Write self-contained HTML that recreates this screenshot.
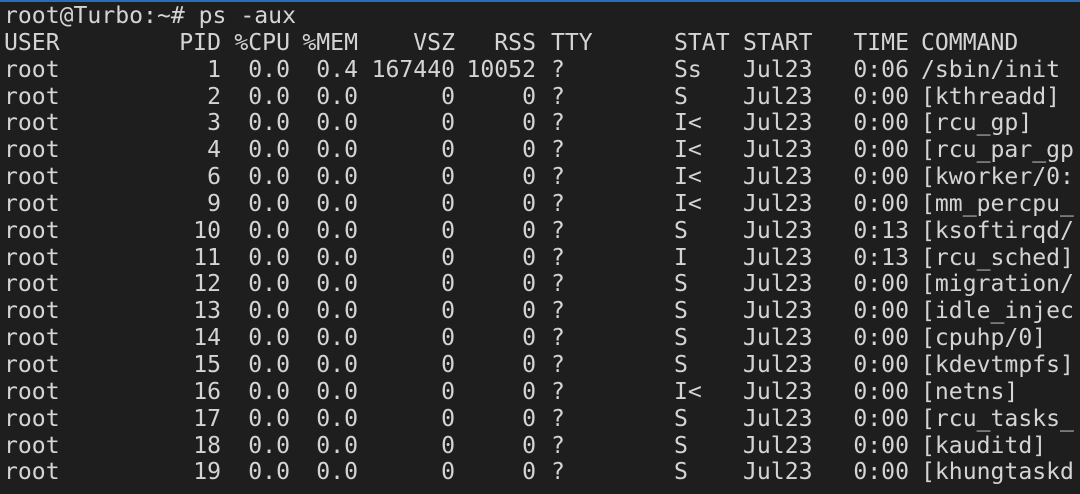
<!DOCTYPE html>
<html><head><style>
html,body{margin:0;padding:0;background:#1e1e1e;width:1080px;height:494px;overflow:hidden}
body{border-top:2px solid #2a6fb5;box-sizing:border-box;position:relative}
pre{margin:0;position:absolute;top:1px;font-family:"DejaVu Sans Mono","Liberation Mono",monospace;font-size:23.1px;line-height:26.85px;color:#d4d4d4;white-space:pre}
.l{text-align:left}.r{text-align:right}
</style></head><body>
<pre style="left:4px">root@Turbo:~# ps -aux</pre>
<pre style="left:4px;top:27.85px">USER
root
root
root
root
root
root
root
root
root
root
root
root
root
root
root
root</pre>
<pre class="r" style="right:859px;top:27.85px">PID
1
2
3
4
6
9
10
11
12
13
14
15
16
17
18
19</pre>
<pre class="r" style="right:790px;top:27.85px">%CPU
0.0
0.0
0.0
0.0
0.0
0.0
0.0
0.0
0.0
0.0
0.0
0.0
0.0
0.0
0.0
0.0</pre>
<pre class="r" style="right:722px;top:27.85px">%MEM
0.4
0.0
0.0
0.0
0.0
0.0
0.0
0.0
0.0
0.0
0.0
0.0
0.0
0.0
0.0
0.0</pre>
<pre class="r" style="right:625px;top:27.85px">VSZ
167440
0
0
0
0
0
0
0
0
0
0
0
0
0
0
0</pre>
<pre class="r" style="right:544px;top:27.85px">RSS
10052
0
0
0
0
0
0
0
0
0
0
0
0
0
0
0</pre>
<pre style="left:551px;top:27.85px">TTY
?
?
?
?
?
?
?
?
?
?
?
?
?
?
?
?</pre>
<pre style="left:674px;top:27.85px">STAT
Ss
S
I&lt;
I&lt;
I&lt;
I&lt;
S
I
S
S
S
S
I&lt;
S
S
S</pre>
<pre style="left:743px;top:27.85px">START
Jul23
Jul23
Jul23
Jul23
Jul23
Jul23
Jul23
Jul23
Jul23
Jul23
Jul23
Jul23
Jul23
Jul23
Jul23
Jul23</pre>
<pre class="r" style="right:171px;top:27.85px">TIME
0:06
0:00
0:00
0:00
0:00
0:00
0:13
0:13
0:00
0:00
0:00
0:00
0:00
0:00
0:00
0:00</pre>
<pre style="left:921px;top:27.85px">COMMAND
/sbin/init
[kthreadd]
[rcu_gp]
[rcu_par_gp
[kworker/0:
[mm_percpu_
[ksoftirqd/
[rcu_sched]
[migration/
[idle_injec
[cpuhp/0]
[kdevtmpfs]
[netns]
[rcu_tasks_
[kauditd]
[khungtaskd</pre>
</body></html>
